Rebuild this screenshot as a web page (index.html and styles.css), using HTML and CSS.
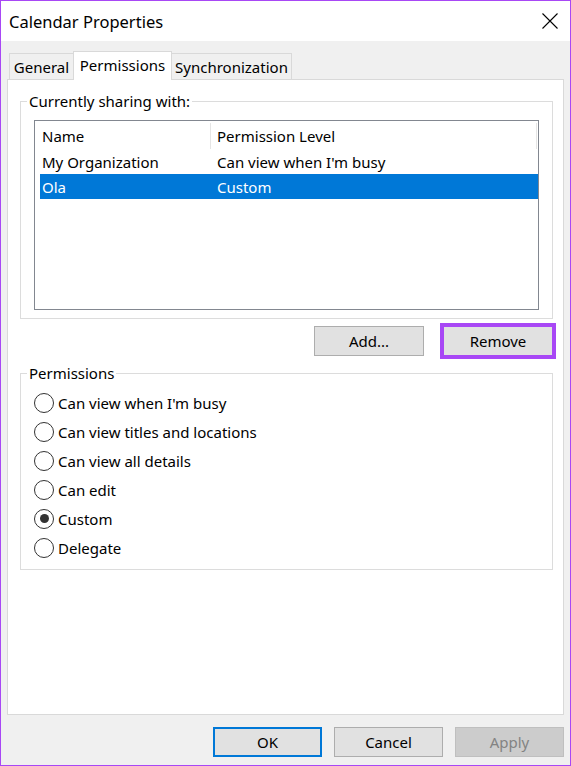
FILE: index.html
```html
<!DOCTYPE html>
<html>
<head>
<meta charset="utf-8">
<title>Calendar Properties</title>
<link rel="stylesheet" href="styles.css">
</head>
<body>
<div class="window">
  <div class="titlebar">
    <span class="title">Calendar Properties</span>
    <svg class="close" width="16" height="16" viewBox="0 0 16 16"><path d="M0.5 0.5 L15.5 15.5 M15.5 0.5 L0.5 15.5" stroke="#000" stroke-width="1.1" fill="none"/></svg>
  </div>
  <div class="content">
    <div class="tabs">
      <div class="tab t-general">General</div>
      <div class="tab t-perm active">Permissions</div>
      <div class="tab t-sync">Synchronization</div>
    </div>
    <div class="panel">
      <fieldset class="group">
        <legend>Currently sharing with:</legend>
        <div class="group-body share-body">
          <div class="listbox">
            <div class="lv-header">
              <div class="hc hc1">Name</div>
              <div class="hc hc2">Permission Level</div>
            </div>
            <div class="lv-row">
              <div class="c1">My Organization</div>
              <div class="c2">Can view when I'm busy</div>
            </div>
            <div class="lv-row selected">
              <div class="c1">Ola</div>
              <div class="c2">Custom</div>
            </div>
          </div>
        </div>
      </fieldset>
      <div class="btnrow">
        <button class="btn">Add...</button>
        <button class="btn remove">Remove</button>
      </div>
      <fieldset class="group perm-group">
        <legend>Permissions</legend>
        <div class="group-body perm-body">
          <label class="radio"><span class="circle"></span>Can view when I'm busy</label>
          <label class="radio"><span class="circle"></span>Can view titles and locations</label>
          <label class="radio"><span class="circle"></span>Can view all details</label>
          <label class="radio"><span class="circle"></span>Can edit</label>
          <label class="radio"><span class="circle checked"></span>Custom</label>
          <label class="radio"><span class="circle"></span>Delegate</label>
        </div>
      </fieldset>
    </div>
    <div class="footer">
      <button class="btn fbtn ok">OK</button>
      <button class="btn fbtn">Cancel</button>
      <button class="btn fbtn disabled">Apply</button>
    </div>
  </div>
</div>
</body>
</html>
```

FILE: styles.css
```css
* { box-sizing: border-box; }
html, body { margin: 0; padding: 0; }
body {
  font-family: "Noto Sans", "Open Sans", sans-serif;
  font-size: 15px;
  color: #000;
  background: #f0f0f0;
}
.window {
  width: 571px;
  height: 766px;
  border: 1px solid #a847f5;
  display: flex;
  flex-direction: column;
  background: #f0f0f0;
}
.titlebar {
  height: 40px;
  background: #fff;
  display: flex;
  align-items: center;
  justify-content: space-between;
  padding: 0 12px 0 8px;
  flex: none;
}
.title { font-size: 16.5px; }
.close { display: block; }
.content {
  flex: 1;
  display: flex;
  flex-direction: column;
  padding: 10px 6px 8px 6px;
}
.tabs {
  height: 28px;
  display: flex;
  align-items: flex-end;
  padding-left: 2px;
  flex: none;
}
.tab {
  height: 26px;
  display: flex;
  align-items: center;
  justify-content: center;
  border-top: 1px solid #d9d9d9;
  background: #f0f0f0;
}
.t-general { width: 64px; border-left: 1px solid #d9d9d9; }
.t-sync { width: 120px; border-right: 1px solid #d9d9d9; }
.t-perm {
  width: 99px;
  border-left: 1px solid #d9d9d9;
  border-right: 1px solid #d9d9d9;
}
.tab.active {
  height: 29px;
  margin-bottom: -1px;
  background: #fff;
  position: relative;
  z-index: 1;
  padding-bottom: 2px;
}
.panel {
  height: 636px;
  background: #fff;
  border: 1px solid #d9d9d9;
  padding: 11px 10px 0 12px;
  flex: none;
}
.group {
  margin: 0;
  padding: 0;
  border: 1px solid #dcdcdc;
  min-width: 0;
}
.group legend {
  padding: 0 2px;
  margin-left: 6px;
  line-height: 20px;
  height: 20px;
}
.share-body { padding: 9px 13px 8px 13px; }
.listbox {
  height: 190px;
  border: 1px solid #828790;
  background: #fff;
}
.lv-header {
  height: 28px;
  display: flex;
  padding-top: 2px;
}
.hc {
  height: 26px;
  line-height: 26px;
  white-space: nowrap;
}
.hc1 { width: 176px; padding-left: 7px; border-right: 1px solid #e5e5e5; }
.hc2 { width: 326px; padding-left: 6px; border-right: 1px solid #e5e5e5; }
.lv-row {
  height: 25px;
  display: flex;
  margin-left: 5px;
  line-height: 26px;
  white-space: nowrap;
}
.lv-row .c1 { width: 171px; padding-left: 2px; }
.lv-row .c2 { flex: 1; padding-left: 6px; }
.lv-row.selected { background: #0078d7; color: #fff; }
.btnrow {
  display: flex;
  justify-content: flex-end;
  gap: 19px;
  margin-top: 7px;
}
.btn {
  font-family: inherit;
  font-size: 15px;
  color: #000;
  width: 110px;
  height: 30px;
  background: #e1e1e1;
  border: 1px solid #adadad;
  padding: 0;
  margin: 0;
}
.btn.remove {
  border-color: #a847f5;
  box-shadow: 0 0 0 3px #a847f5;
}
.perm-group { margin-top: 7px; }
.perm-body { padding: 5px 13px 7px 13px; }
.radio {
  height: 29px;
  display: flex;
  align-items: center;
}
.circle {
  width: 20px;
  height: 20px;
  border: 1px solid #333;
  border-radius: 50%;
  margin-right: 4px;
  display: flex;
  align-items: center;
  justify-content: center;
  flex: none;
}
.circle.checked::after {
  content: "";
  width: 9px;
  height: 9px;
  border-radius: 50%;
  background: #333;
}
.footer {
  margin-top: 12px;
  display: flex;
  justify-content: flex-end;
  gap: 12px;
}
.fbtn { width: 109px; }
.fbtn.ok { border: 2px solid #0078d7; }
.fbtn.disabled {
  background: #cccccc;
  border-color: #bfbfbf;
  color: #838383;
}
```
